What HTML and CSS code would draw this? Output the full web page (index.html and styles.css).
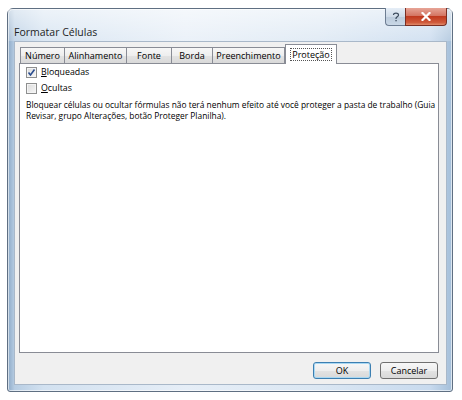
FILE: index.html
```html
<!DOCTYPE html>
<html lang="pt">
<head>
<meta charset="utf-8">
<title>Formatar Células</title>
<link rel="stylesheet" href="styles.css">
</head>
<body>
<div class="window">
  <div class="titlebar">
    <span class="title">Formatar Células</span>
    <div class="caption">
      <div class="cbtn help">
        <svg width="8" height="10" viewBox="0 0 8 10"><path d="M1.5 3 C1.5 0.5 6.5 0.5 6.5 3 C6.5 4.8 4 4.8 4 6.5 L4 7" fill="none" stroke="#3b4a5c" stroke-width="1.2"/><rect x="3.4" y="8" width="1.3" height="1.3" fill="#3b4a5c"/></svg>
      </div>
      <div class="cbtn close">
        <svg width="10" height="9" viewBox="0 0 10 9"><path d="M1.5 1 L8.5 8 M8.5 1 L1.5 8" stroke="#fff" stroke-width="2.2" stroke-linecap="square"/></svg>
      </div>
    </div>
  </div>
  <div class="client">
    <div class="tabs">
      <div class="tab t-num">Número</div>
      <div class="tab t-ali">Alinhamento</div>
      <div class="tab t-fon">Fonte</div>
      <div class="tab t-bor">Borda</div>
      <div class="tab t-pre">Preenchimento</div>
      <div class="tab active t-pro"><span class="focus">Proteção</span></div>
    </div>
    <div class="panel">
      <div class="chk">
        <span class="box">
          <svg width="9" height="9" viewBox="0 0 9 9"><path d="M1.5 4.5 L3.5 7 L7.5 1.5" fill="none" stroke="#2a4d8f" stroke-width="1.6"/></svg>
        </span>
        <span class="lbl"><u>B</u>loqueadas</span>
      </div>
      <div class="chk">
        <span class="box"></span>
        <span class="lbl"><u>O</u>cultas</span>
      </div>
      <p class="note">Bloquear células ou ocultar fórmulas não terá nenhum efeito até você proteger a pasta de trabalho (Guia<br>Revisar, grupo Alterações, botão Proteger Planilha).</p>
    </div>
    <div class="buttons">
      <div class="btn default">OK</div>
      <div class="btn">Cancelar</div>
    </div>
  </div>
</div>
</body>
</html>
```

FILE: styles.css
```css
html, body {
  margin: 0;
  padding: 0;
  background: #ffffff;
}

body {
  width: 462px;
  height: 400px;
  padding: 8px 0 0 7px;
  box-sizing: border-box;
  font-family: "Open Sans", "Noto Sans", sans-serif;
  font-size: 9px;
  color: #000;
}

.window {
  width: 446px;
  height: 384px;
  box-sizing: border-box;
  border: 1px solid #5f6f82;
  border-radius: 6px 6px 3px 3px;
  background: linear-gradient(90deg, #8fabc8 0%, #b7cde3 1.5%, #d2e1f0 8%, #e6eef7 40%, #dbe7f3 70%, #c8daee 95%, #a5bfd9 100%);
  display: flex;
  flex-direction: column;
  box-shadow: inset 0 0 0 1px rgba(255,255,255,0.6);
}

.titlebar {
  height: 32px;
  display: flex;
  justify-content: space-between;
  align-items: flex-start;
  padding-left: 6px;
  padding-right: 5px;
  background: linear-gradient(180deg, rgba(255,255,255,0.6), rgba(255,255,255,0.2));
}

.title {
  margin-top: 16px;
  font-size: 10.5px;
  line-height: 14px;
  color: #1e1e1e;
}

.caption {
  display: flex;
  margin-top: -1px;
}

.cbtn {
  height: 18px;
  display: flex;
  align-items: center;
  justify-content: center;
  box-sizing: border-box;
  border: 1px solid #6d7d92;
  border-top: none;
}

.help {
  width: 20px;
  border-radius: 0 0 0 4px;
  border-right: none;
  background: linear-gradient(180deg, #e6eef7 0%, #cfdbe8 50%, #bccbdc 52%, #c9d7e6 100%);
}

.close {
  width: 42px;
  border-radius: 0 0 4px 0;
  background: linear-gradient(180deg, #e7a597 0%, #d47563 45%, #c0391f 50%, #cf5a3b 85%, #e08a6a 100%);
  border-color: #7a2e22;
}

.client {
  flex: 1;
  margin: 0 5px 6px 6px;
  background: #f0f0f0;
  border: 1px solid #a9b8c9;
  display: flex;
  flex-direction: column;
  padding: 2px 7px 0 4px;
}

.tabs {
  display: flex;
  align-items: flex-end;
  height: 19px;
  padding-left: 1px;
  position: relative;
  z-index: 1;
}

.tab {
  height: 16px;
  box-sizing: border-box;
  border: 1px solid #898c95;
  border-bottom: none;
  margin-right: -1px;
  background: linear-gradient(180deg, #f7f7f7 0%, #eeeeee 50%, #e3e3e3 51%, #d9d9d9 100%);
  display: flex;
  align-items: center;
  justify-content: center;
  font-size: 9px;
  line-height: 12px;
  color: #000;
}

.t-num { width: 45px; }
.t-ali { width: 63px; }
.t-fon { width: 46px; }
.t-bor { width: 42px; }
.t-pre { width: 73px; }

.tab.active {
  width: 52px;
  margin-left: 1px;
  background: #ffffff;
  margin-bottom: -1px;
  height: 20px;
  padding-bottom: 1px;
}

.focus {
  border: 1px dotted #555;
  padding: 0 1px;
  line-height: 11px;
}

.panel {
  height: 290px;
  box-sizing: border-box;
  background: #ffffff;
  border: 1px solid #898c95;
  padding: 0 2px 0 6px;
}

.chk {
  display: flex;
  align-items: center;
  height: 16px;
  gap: 4px;
}

.box {
  width: 9px;
  height: 9px;
  border: 1px solid #8e8f8f;
  background: linear-gradient(135deg, #dcdcdc, #f6f6f6);
  display: flex;
  align-items: center;
  justify-content: center;
  box-shadow: inset 0 0 0 1px #f4f4f4;
}

.lbl {
  font-size: 8.8px;
  line-height: 12px;
}

.note {
  margin: 3px 0 0 0;
  font-size: 8.4px;
  line-height: 11px;
  white-space: nowrap;
}

.buttons {
  display: flex;
  justify-content: flex-end;
  gap: 9px;
  margin-top: 9px;
  padding-right: 1px;
}

.btn {
  width: 58px;
  height: 17px;
  box-sizing: border-box;
  border: 1px solid #707070;
  border-radius: 3px;
  background: linear-gradient(180deg, #f7f7f7 0%, #eeeeee 50%, #e3e3e3 51%, #d9d9d9 100%);
  display: flex;
  align-items: center;
  justify-content: center;
  font-size: 9px;
}

.btn.default {
  border-color: #3c7fb1;
  box-shadow: inset 0 0 0 1px #a9d8f3;
}
```
